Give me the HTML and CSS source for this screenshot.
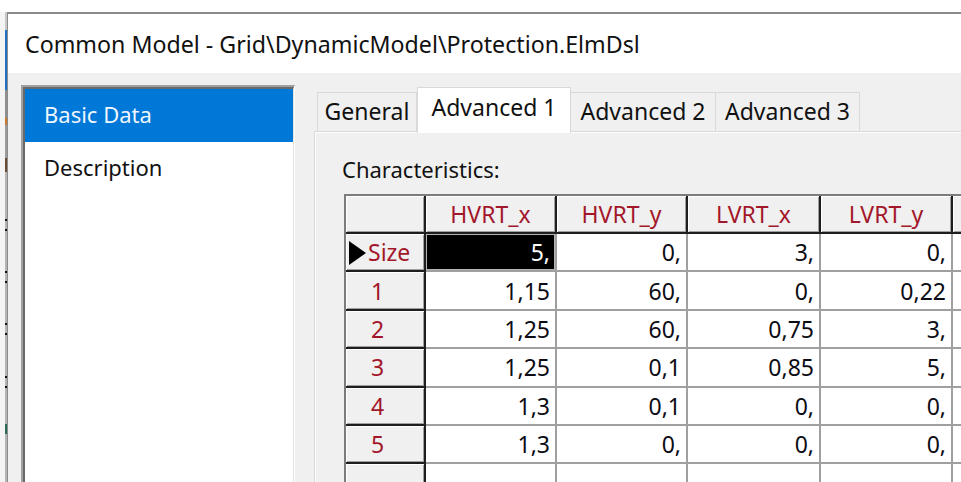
FILE: index.html
```html
<!DOCTYPE html>
<html lang="en">
<head>
<meta charset="utf-8">
<title>Common Model - Protection.ElmDsl</title>
<link rel="stylesheet" href="styles.css">
</head>
<body>
<div class="desktop">
  <div class="backdrop"></div>
  <div class="window">
    <div class="titlebar">Common Model - Grid\DynamicModel\Protection.ElmDsl</div>
    <div class="client">
      <div class="pages-frame">
        <ul class="pages">
          <li class="page selected">Basic Data</li>
          <li class="page">Description</li>
        </ul>
      </div>
      <div class="tabctl">
        <div class="tabstrip">
          <div class="tab tab-general">General</div>
          <div class="tab tab-adv1 active">Advanced 1</div>
          <div class="tab tab-adv2">Advanced 2</div>
          <div class="tab tab-adv3">Advanced 3</div>
        </div>
        <div class="panel">
          <div class="caption">Characteristics:</div>
          <table class="grid">
            <colgroup>
              <col class="c-rowhdr">
              <col class="c-80">
              <col class="c-80">
              <col class="c-82">
              <col class="c-81">
              <col class="c-more">
            </colgroup>
            <thead>
              <tr>
                <th class="corner"></th>
                <th>HVRT_x</th>
                <th>HVRT_y</th>
                <th>LVRT_x</th>
                <th>LVRT_y</th>
                <th></th>
              </tr>
            </thead>
            <tbody>
              <tr>
                <th class="rowhdr size"><svg class="pointer" width="18" height="24" viewBox="0 0 18 24"><polygon points="0,0 17,12 0,24" fill="#000"/></svg>Size</th>
                <td class="current">5,</td><td>0,</td><td>3,</td><td>0,</td><td></td>
              </tr>
              <tr><th class="rowhdr">1</th><td>1,15</td><td>60,</td><td>0,</td><td>0,22</td><td></td></tr>
              <tr><th class="rowhdr">2</th><td>1,25</td><td>60,</td><td>0,75</td><td>3,</td><td></td></tr>
              <tr><th class="rowhdr">3</th><td>1,25</td><td>0,1</td><td>0,85</td><td>5,</td><td></td></tr>
              <tr><th class="rowhdr">4</th><td>1,3</td><td>0,1</td><td>0,</td><td>0,</td><td></td></tr>
              <tr><th class="rowhdr">5</th><td>1,3</td><td>0,</td><td>0,</td><td>0,</td><td></td></tr>
              <tr><th class="rowhdr"></th><td></td><td></td><td></td><td></td><td></td></tr>
            </tbody>
          </table>
        </div>
      </div>
    </div>
  </div>
</div>
</body>
</html>
```

FILE: styles.css
```css
html, body {
  margin: 0;
  padding: 0;
}

body {
  width: 961px;
  height: 482px;
  overflow: hidden;
  background: #ffffff;
  font-family: "Noto Sans", "Open Sans", sans-serif;
  font-size: 22px;
  color: #000;
}

.desktop {
  display: flex;
  height: 482px;
  padding-top: 12px;
  box-sizing: border-box;
}

/* sliver of the application window behind the dialog */
.backdrop {
  flex: none;
  width: 7px;
  background:
    linear-gradient(to bottom,
      #c8c8c8 0, #c8c8c8 18px,
      #1f6fc4 18px, #1f6fc4 78px,
      #8f8f8f 78px, #8f8f8f 106px,
      #c9782a 106px, #c9782a 113px,
      #9c9c9c 113px, #9c9c9c 146px,
      #6a4a30 146px, #6a4a30 160px,
      #b4b4b4 160px, #b4b4b4 207px,
      #111 207px, #111 209px,
      #b4b4b4 209px, #b4b4b4 217px,
      #111 217px, #111 219px,
      #b4b4b4 219px, #b4b4b4 259px,
      #111 259px, #111 261px,
      #b4b4b4 261px, #b4b4b4 269px,
      #111 269px, #111 271px,
      #b4b4b4 271px, #b4b4b4 311px,
      #111 311px, #111 313px,
      #b4b4b4 313px, #b4b4b4 321px,
      #111 321px, #111 323px,
      #b4b4b4 323px, #b4b4b4 364px,
      #111 364px, #111 366px,
      #b4b4b4 366px, #b4b4b4 374px,
      #111 374px, #111 376px,
      #b4b4b4 376px, #b4b4b4 412px,
      #2c6a5a 412px, #2c6a5a 422px,
      #b4b4b4 422px) right top / 2px 100% no-repeat,
    #f4f4f4;
}

.window {
  flex: 1;
  min-width: 0;
  display: flex;
  flex-direction: column;
  background: #f0f0f0;
  border-top: 2px solid #8b8b8b;
  border-left: 1px solid #8b8b8b;
}

.titlebar {
  flex: none;
  height: 59px;
  display: flex;
  align-items: center;
  padding-left: 17px;
  background: #ffffff;
  color: #111;
  font-size: 23.2px;
  white-space: nowrap;
}

.client {
  flex: 1;
  min-height: 0;
  display: flex;
  gap: 19px;
  padding: 12px 0 0 13px;
}

/* sunken list of dialog pages */
.pages-frame {
  flex: none;
  width: 274px;
  box-sizing: border-box;
  border-style: solid;
  border-width: 2px 1px 0 2px;
  border-color: #a0a0a0 #ffffff #ffffff #a0a0a0;
}

.pages {
  list-style: none;
  margin: 0;
  padding: 0;
  height: 100%;
  box-sizing: border-box;
  background: #ffffff;
  border-style: solid;
  border-width: 2px 1px 0 2px;
  border-color: #696969 #e3e3e3 #e3e3e3 #696969;
}

.page {
  height: 53px;
  box-sizing: border-box;
  display: flex;
  align-items: center;
  padding: 0 0 4px 19px;
  color: #111;
}

.page.selected {
  background: #0078d7;
  color: #eef6ff;
}

/* tab control */
.tabctl {
  flex: 1;
  min-width: 0;
  display: flex;
  flex-direction: column;
}

.tabstrip {
  flex: none;
  height: 46px;
  display: flex;
  align-items: flex-end;
  padding-left: 3px;
  font-size: 23px;
}

.tab {
  height: 39px;
  box-sizing: border-box;
  display: flex;
  align-items: center;
  justify-content: center;
  padding-bottom: 2px;
  border: 1px solid #d9d9d9;
  border-bottom: none;
  background: #f0f0f0;
  color: #111;
  white-space: nowrap;
}

.tab-general { width: 100px; }
.tab-adv1 { width: 154px; }
.tab-adv2 { width: 145px; border-left: none; }
.tab-adv3 { width: 144px; border-left: none; }

.tab.active {
  position: relative;
  z-index: 1;
  height: 46px;
  margin-bottom: -2px;
  padding-bottom: 8px;
  background: #ffffff;
}

.panel {
  flex: 1;
  min-height: 0;
  overflow: hidden;
  border-top: 1px solid #d9d9d9;
  border-left: 1px solid #d9d9d9;
  box-shadow: inset 1px 1px 0 #ffffff;
  padding: 22px 0 0 29px;
}

.caption {
  height: 30px;
  line-height: 30px;
  margin: 0 0 10px -2px;
  padding-bottom: 2px;
  box-sizing: border-box;
  color: #111;
  white-space: nowrap;
}

/* characteristics spreadsheet */
.grid {
  border-collapse: separate;
  border-spacing: 0;
  table-layout: fixed;
  width: 667px;
  font-size: 23px;
  border-top: 2px solid #7c7c7c;
  border-left: 2px solid #7c7c7c;
}

.c-rowhdr { width: 80px; }
.c-80 { width: 131px; }
.c-82 { width: 133px; }
.c-81 { width: 132px; }
.c-more { width: 60px; }

.grid th,
.grid td {
  padding: 0;
  box-sizing: border-box;
  white-space: nowrap;
  overflow: hidden;
}

.grid thead th {
  height: 38px;
  background: #f0f0f0;
  color: #a3172a;
  font-weight: normal;
  text-align: center;
  border-right: 2px solid #1e1e1e;
  border-bottom: 2px solid #1e1e1e;
  box-shadow: inset 1px 1px 0 #ffffff, inset -1px -1px 0 #a0a0a0;
}

.grid tbody tr {
  height: 38.4px;
}

.grid .rowhdr {
  background: #f0f0f0;
  color: #a3172a;
  font-weight: normal;
  text-align: center;
  padding-right: 15px;
  border-right: 2px solid #1e1e1e;
  border-bottom: 2px solid #1e1e1e;
  box-shadow: inset 1px 1px 0 #ffffff, inset -1px -1px 0 #a0a0a0;
}

.grid .rowhdr.size {
  text-align: left;
  padding: 0 0 0 3px;
}

.pointer {
  display: inline-block;
  vertical-align: -4px;
  margin-right: 1px;
}

.grid td {
  background: #ffffff;
  text-align: right;
  padding-right: 5px;
  border-right: 2px solid #a0a0a0;
  border-bottom: 2px solid #a0a0a0;
  color: #0c0c14;
}

.grid td.current {
  background: #000000;
  color: #ffffff;
  box-shadow: inset 0 0 0 1px #b4b4b4;
}
```
